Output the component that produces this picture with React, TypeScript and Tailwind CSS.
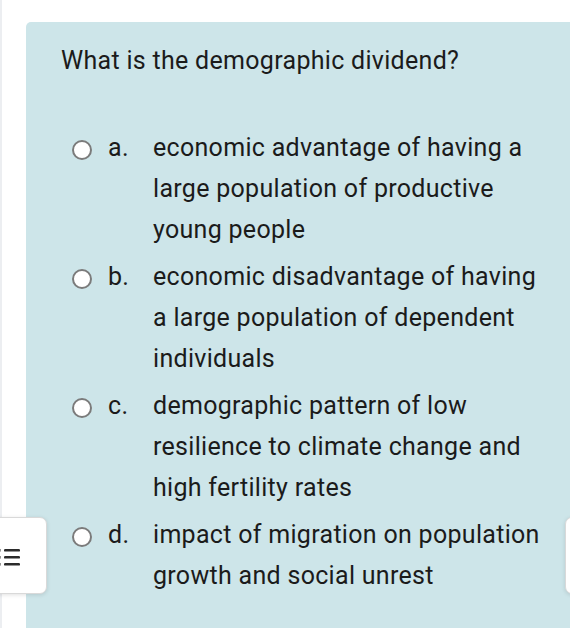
import React from "react";

const options = [
  { key: "a.", text: "economic advantage of having a large population of productive young people" },
  { key: "b.", text: "economic disadvantage of having a large population of dependent individuals" },
  { key: "c.", text: "demographic pattern of low resilience to climate change and high fertility rates" },
  { key: "d.", text: "impact of migration on population growth and social unrest" },
];

export default function App() {
  return (
    <div className="relative w-[570px] h-[628px] overflow-hidden bg-white font-['Roboto',sans-serif] text-[#1b1b1b] text-[25px] tracking-[0.3px]">
      <div className="flex h-full">
        <div className="w-[26px] shrink-0 border-l-2 border-[#eceef1] bg-white" />
        <div className="flex-1 mt-[22px] bg-[#cde5e9] rounded-tl-[5px] pl-[35px] pt-[18px]">
          <p className="leading-[41px]">What is the demographic dividend?</p>
          <div className="mt-[46px] flex flex-col gap-[6px]">
            {options.map((o) => (
              <div key={o.key} className="flex pl-[11px]">
                <div className="mt-[13px] w-[20px] h-[20px] shrink-0 rounded-full border-2 border-[#7b7b7b] bg-white" />
                <div className="ml-[16px] w-[45px] shrink-0 leading-[41px]">{o.key}</div>
                <div className="w-[394px] leading-[41px]">{o.text}</div>
              </div>
            ))}
          </div>
        </div>
      </div>

      {/* left floating button */}
      <div className="absolute left-[-34px] top-[517px] w-[81px] h-[77px] bg-white border border-[#d9d9d9] rounded-[7px] shadow-[0_1px_4px_rgba(0,0,0,0.12)] flex items-center justify-end pr-[23px]">
        <svg width="26" height="20" viewBox="0 0 26 20" className="mt-[2px]">
          <g fill="#2b2b2b">
            <rect x="0" y="2" width="3.5" height="2.6" />
            <rect x="0" y="9" width="3.5" height="2.6" />
            <rect x="0" y="16" width="3.5" height="2.6" />
            <rect x="7" y="2" width="16" height="2.6" rx="1.2" />
            <rect x="7" y="9" width="16" height="2.6" rx="1.2" />
            <rect x="7" y="16" width="16" height="2.6" rx="1.2" />
          </g>
        </svg>
      </div>

      {/* right floating element */}
      <div className="absolute left-[565px] top-[517px] w-[60px] h-[77px] bg-white border border-[#d9d9d9] rounded-[7px] shadow-[0_1px_4px_rgba(0,0,0,0.12)]" />
    </div>
  );
}
